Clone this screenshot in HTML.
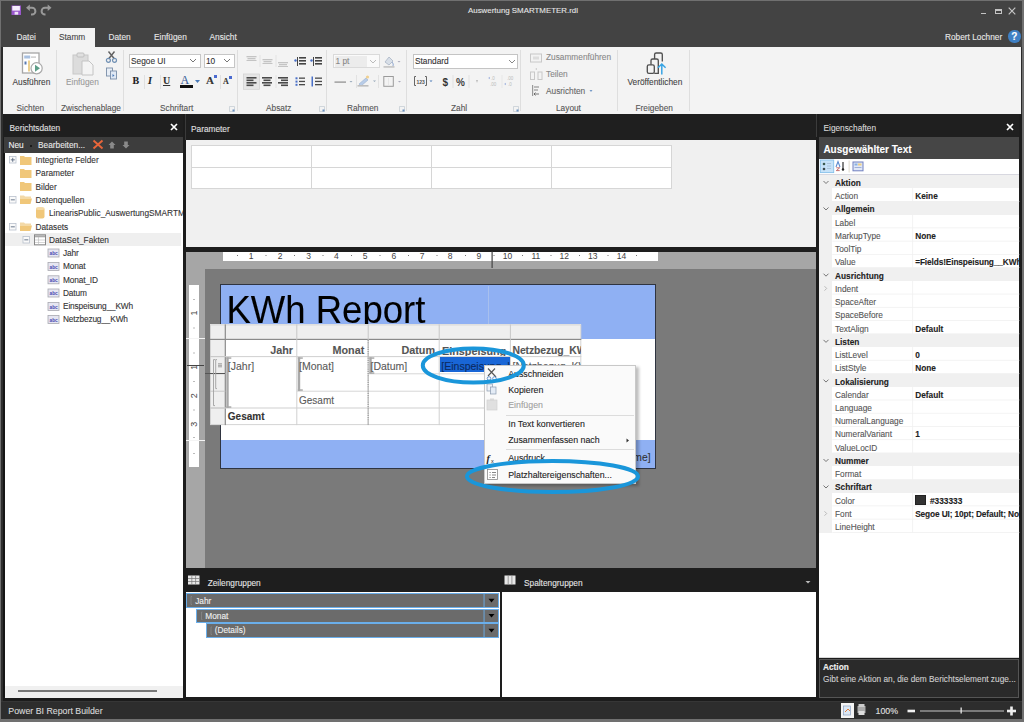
<!DOCTYPE html>
<html><head><meta charset="utf-8">
<style>
*{margin:0;padding:0;box-sizing:border-box}
html,body{width:1024px;height:722px;overflow:hidden;background:#2b2b2b;font-family:"Liberation Sans",sans-serif;font-size:8.3px;color:#333}
.a{position:absolute}
.t{position:absolute;white-space:nowrap;line-height:1;-webkit-text-stroke:0.1px currentColor}
</style></head><body>
<!-- outer frame -->
<div class="a" style="left:0;top:0;width:1024px;height:722px;background:#707070"></div>
<div class="a" style="left:1px;top:1px;width:1021px;height:718px;background:#2a2a2a"></div>
<!-- title bar -->
<div class="a" style="left:1px;top:1px;width:1021px;height:46px;background:#434343"></div>
<!-- ribbon -->
<div class="a" style="left:3px;top:47px;width:1018px;height:66.5px;background:#f3f3f3"></div>
<div class="a" style="left:50px;top:27.5px;width:45px;height:20px;background:#f3f3f3"></div>


<!-- TITLE CONTENT -->
<svg class="a" style="left:0;top:0" width="60" height="20" viewBox="0 0 60 20">
 <rect x="11.5" y="5.5" width="9.5" height="9.5" fill="#9a58cc"/>
 <rect x="12.3" y="6" width="7.6" height="4.6" fill="#f6eefc"/>
 <rect x="14.6" y="11.8" width="3.6" height="2.8" fill="#f0e4f8"/>
 <path d="M26 7.8 L29.8 4.6 V11z" fill="#9a9a9a"/>
 <path d="M28.5 7.8 H32 a3.4 3.4 0 0 1 0 6.8 H31" fill="none" stroke="#9a9a9a" stroke-width="2"/>
 <path d="M51.5 7.8 L47.7 4.6 V11z" fill="#9a9a9a"/>
 <path d="M49 7.8 H45 a3.4 3.4 0 0 0 0 6.8 H45.5" fill="none" stroke="#9a9a9a" stroke-width="2"/>
</svg>
<div class="t" style="left:468px;top:7px;font-size:7.9px;color:#e6e6e6">Auswertung SMARTMETER.rdl</div>
<div class="a" style="left:980.5px;top:12.5px;width:5px;height:1.5px;background:#c4c4c4"></div>
<div class="a" style="left:994.5px;top:8.8px;width:7.5px;height:5px;border:1.1px solid #c4c4c4;border-top-width:2px"></div>
<svg class="a" style="left:1008px;top:6.5px" width="8" height="8" viewBox="0 0 8 8"><path d="M0.7 0.7 L7.3 7.3 M7.3 0.7 L0.7 7.3" stroke="#c4c4c4" stroke-width="1.2"/></svg>
<div class="t" style="left:16.5px;top:32.5px;color:#e8e8e8">Datei</div>
<div class="t" style="left:59px;top:32.5px;color:#444">Stamm</div>
<div class="t" style="left:108.5px;top:32.5px;color:#e8e8e8">Daten</div>
<div class="t" style="left:154px;top:32.5px;color:#e8e8e8">Einfügen</div>
<div class="t" style="left:209.5px;top:32.5px;color:#e8e8e8">Ansicht</div>
<div class="t" style="left:945px;top:32.8px;color:#e8e8e8">Robert Lochner</div>
<div class="a" style="left:1008px;top:30.3px;width:12.5px;height:12.5px;border-radius:50%;background:#3f80c4"></div>
<div class="t" style="left:1011.3px;top:31.8px;font-size:10px;font-weight:bold;color:#fff">?</div>


<!-- RIBBON CONTENT -->
<div class="a" style="left:56px;top:50px;width:1px;height:61px;background:#dedede"></div>
<div class="a" style="left:122.5px;top:50px;width:1px;height:61px;background:#dedede"></div>
<div class="a" style="left:237px;top:50px;width:1px;height:61px;background:#dedede"></div>
<div class="a" style="left:326px;top:50px;width:1px;height:61px;background:#dedede"></div>
<div class="a" style="left:405.5px;top:50px;width:1px;height:61px;background:#dedede"></div>
<div class="a" style="left:520px;top:50px;width:1px;height:61px;background:#dedede"></div>
<div class="a" style="left:617px;top:50px;width:1px;height:61px;background:#dedede"></div>
<div class="a" style="left:689px;top:50px;width:1px;height:61px;background:#dedede"></div>
<!-- group labels -->
<div class="t" style="left:16.5px;top:103.5px;color:#555">Sichten</div>
<div class="t" style="left:61px;top:103.5px;color:#555">Zwischenablage</div>
<div class="t" style="left:160px;top:103.5px;color:#555">Schriftart</div>
<div class="t" style="left:266px;top:103.5px;color:#555">Absatz</div>
<div class="t" style="left:347px;top:103.5px;color:#555">Rahmen</div>
<div class="t" style="left:451px;top:103.5px;color:#555">Zahl</div>
<div class="t" style="left:556px;top:103.5px;color:#555">Layout</div>
<div class="t" style="left:635.5px;top:103.5px;color:#555">Freigeben</div>
<!-- dialog launchers -->
<svg class="a" style="left:0;top:0;overflow:visible" width="1" height="1">
 <g fill="none" stroke="#c0c8d0" stroke-width="0.7">
  <path d="M229.5 106.5 h5 v5 h-5z"/><path d="M319.5 106.5 h5 v5 h-5z"/><path d="M399.5 106.5 h5 v5 h-5z"/><path d="M513.5 106.5 h5 v5 h-5z"/>
 </g>
 <g fill="#6a90c0"><rect x="232.5" y="109.5" width="2" height="2"/><rect x="322.5" y="109.5" width="2" height="2"/><rect x="402.5" y="109.5" width="2" height="2"/><rect x="516.5" y="109.5" width="2" height="2"/></g>
</svg>
<!-- Ausführen -->
<svg class="a" style="left:0;top:0;overflow:visible" width="1" height="1">
 <rect x="22.5" y="53" width="16.5" height="20" fill="#fff" stroke="#a6a6a6" stroke-width="1.3"/>
 <rect x="24.2" y="55.5" width="6" height="3" fill="#a8c0e0"/><rect x="31" y="56.5" width="5" height="1.2" fill="#c0c0c0"/>
 <rect x="28" y="60.5" width="2" height="11" fill="#ecd090"/><rect x="24.5" y="61.5" width="2" height="3" fill="#5a7ab0"/>
 <circle cx="36.6" cy="68.3" r="5.6" fill="#fff" stroke="#a8a8a8" stroke-width="1.2"/>
 <path d="M35 64.8 L40 68.3 L35 71.8z" fill="#5e9e88"/>
</svg>
<div class="t" style="left:12.5px;top:77.5px;color:#444">Ausführen</div>
<!-- Einfügen -->
<svg class="a" style="left:71px;top:51px" width="26" height="26" viewBox="0 0 26 26">
 <rect x="2" y="4" width="15" height="19" fill="#dcdcdc" stroke="#c8c8c8"/>
 <rect x="6" y="2" width="7" height="4" rx="1" fill="#e0e0e0" stroke="#c0c0c0"/>
 <path d="M11 10 h7 l4 4 v10 h-11z" fill="#f4f4f4" stroke="#c4c4c4"/>
</svg>
<div class="t" style="left:66px;top:77.5px;color:#9a9a9a">Einfügen</div>
<svg class="a" style="left:104px;top:50px" width="16" height="32" viewBox="0 0 16 32">
 <path d="M4.5 1.5 L10.5 9 M10.5 1.5 L4.5 9" stroke="#606060" stroke-width="1.4"/>
 <circle cx="4.4" cy="10.3" r="2" fill="none" stroke="#7090b4" stroke-width="1.2"/>
 <circle cx="10.5" cy="10.3" r="2" fill="none" stroke="#7090b4" stroke-width="1.2"/>
 <rect x="2.5" y="18" width="6" height="8" fill="#e8eef6" stroke="#7a8ea8" stroke-width="0.9"/>
 <rect x="6.5" y="21" width="6" height="8" fill="#dfe8f4" stroke="#7a8ea8" stroke-width="0.9"/>
 <path d="M8.5 24 l2 1.5 -2 1.5z" fill="#4a7ab8"/>
</svg>
<!-- Schriftart -->
<div class="a" style="left:129px;top:53.5px;width:72px;height:14.5px;background:#fff;border:1px solid #c6c6c6"></div>
<div class="t" style="left:131px;top:57px;color:#333">Segoe UI</div>
<svg class="a" style="left:189px;top:58px" width="8" height="5" viewBox="0 0 8 5"><path d="M1 1 L4 4 L7 1" fill="none" stroke="#777" stroke-width="1"/></svg>
<div class="a" style="left:204px;top:53.5px;width:31px;height:14.5px;background:#fff;border:1px solid #c6c6c6"></div>
<div class="t" style="left:206px;top:57px;color:#333">10</div>
<svg class="a" style="left:223px;top:58px" width="8" height="5" viewBox="0 0 8 5"><path d="M1 1 L4 4 L7 1" fill="none" stroke="#777" stroke-width="1"/></svg>
<div class="t" style="left:132.5px;top:76px;font-family:'Liberation Serif';font-weight:bold;font-size:10px;color:#222">B</div>
<div class="t" style="left:148px;top:76px;font-family:'Liberation Serif';font-weight:bold;font-style:italic;font-size:10px;color:#222">I</div>
<div class="t" style="left:163px;top:76px;font-family:'Liberation Serif';font-weight:bold;font-size:10px;color:#333;text-decoration:underline">U</div>
<div class="t" style="left:180.5px;top:73.5px;font-family:'Liberation Serif';font-size:12px;color:#3a5f9a">A</div>
<div class="a" style="left:180px;top:84.5px;width:13px;height:3px;background:#111"></div>
<svg class="a" style="left:195px;top:80px" width="5" height="3"><path d="M0 0h5l-2.5 3z" fill="#4a7ab8"/></svg>
<div class="t" style="left:206px;top:75px;font-family:'Liberation Serif';font-weight:bold;font-size:11px;color:#333">A</div>
<div class="a" style="left:214px;top:75px;width:2.5px;height:2.5px;background:#4a6ad0"></div>
<div class="t" style="left:223px;top:78px;font-family:'Liberation Serif';font-weight:bold;font-size:8px;color:#333">A</div>
<div class="a" style="left:229px;top:76px;width:2.5px;height:2.5px;background:#4a6ad0"></div>
<div class="a" style="left:144px;top:75px;width:1px;height:14px;background:#e0e0e0"></div>
<div class="a" style="left:160px;top:75px;width:1px;height:14px;background:#e0e0e0"></div>
<div class="a" style="left:220px;top:75px;width:1px;height:14px;background:#e0e0e0"></div>


<!-- ABSATZ -->
<svg class="a" style="left:0;top:0;overflow:visible" width="1" height="1">
 <g fill="#c4c4c4">
  <rect x="246.5" y="56" width="10" height="1.3"/><rect x="247.5" y="58" width="8" height="1.3"/><rect x="246.5" y="60" width="10" height="1"/>
  <rect x="262.5" y="59" width="10" height="1.3"/><rect x="263.5" y="61" width="8" height="1.3"/><rect x="262.5" y="63" width="10" height="1"/>
  <rect x="278" y="62" width="10" height="1.3"/><rect x="279" y="64" width="8" height="1.3"/><rect x="278" y="66" width="10" height="1"/>
 </g>
 <rect x="259.5" y="55" width="1" height="12" fill="#e4e4e4"/><rect x="275.5" y="55" width="1" height="12" fill="#e4e4e4"/>
 <g fill="#444">
  <rect x="299" y="57" width="7" height="1.6"/><rect x="299" y="60" width="7" height="1.6"/><rect x="299" y="63" width="7" height="1.6"/>
  <rect x="297" y="57" width="1" height="9"/>
  <rect x="315" y="57" width="7" height="1.6"/><rect x="315" y="60" width="7" height="1.6"/><rect x="315" y="63" width="7" height="1.6"/>
  <rect x="313" y="57" width="1" height="9"/>
 </g>
 <circle cx="295.5" cy="60.5" r="1.2" fill="#4a70c8"/><circle cx="311.5" cy="60.5" r="1.2" fill="#4a70c8"/>
 <rect x="243.5" y="74" width="16" height="15.3" fill="#e6e6e6" stroke="#d0d0d0" stroke-width="0.7"/>
 <g fill="#4a4a4a">
  <rect x="246.5" y="77" width="10" height="1.6"/><rect x="246.5" y="79.5" width="7" height="1.6"/><rect x="246.5" y="82" width="10" height="1.6"/><rect x="246.5" y="84.5" width="7" height="1.6"/>
  <rect x="262" y="77" width="10" height="1.6"/><rect x="263.5" y="79.5" width="7" height="1.6"/><rect x="262" y="82" width="10" height="1.6"/><rect x="263.5" y="84.5" width="7" height="1.6"/>
  <rect x="278" y="77" width="10" height="1.6"/><rect x="281" y="79.5" width="7" height="1.6"/><rect x="278" y="82" width="10" height="1.6"/><rect x="281" y="84.5" width="7" height="1.6"/>
  <rect x="299" y="77.5" width="6" height="1.3"/><rect x="299" y="80.8" width="6" height="1.3"/><rect x="299" y="84" width="6" height="1.3"/>
  <rect x="315" y="77.5" width="7" height="1.3"/><rect x="315" y="80.8" width="7" height="1.3"/><rect x="315" y="84" width="7" height="1.3"/>
 </g>
 <g fill="#4a70c8">
  <rect x="295.5" y="77.3" width="2" height="2"/><rect x="295.5" y="80.6" width="2" height="2"/><rect x="295.5" y="83.8" width="2" height="2"/>
  <rect x="311.5" y="76.5" width="1.5" height="10"/>
 </g>
 <rect x="275.5" y="75" width="1" height="13" fill="#e4e4e4"/>
</svg>
<!-- RAHMEN -->
<div class="a" style="left:333px;top:53.7px;width:47px;height:14.4px;background:#fafafa;border:1px solid #dadada"></div>
<div class="a" style="left:335px;top:55.5px;width:32px;height:11px;background:#ececec"></div>
<div class="t" style="left:335.5px;top:57px;color:#888">1 pt</div>
<svg class="a" style="left:369px;top:58.5px" width="8" height="5" viewBox="0 0 8 5"><path d="M1 1 L4 4 L7 1" fill="none" stroke="#bbb" stroke-width="1"/></svg>
<svg class="a" style="left:0;top:0;overflow:visible" width="1" height="1">
 <path d="M385 62 l4 -5 4 4 -4 4z" fill="#d8dfe8" stroke="#a8b4c4" stroke-width="0.8"/>
 <path d="M392 62 q2 2 1 4" fill="none" stroke="#90a8d0" stroke-width="1"/>
 <rect x="383.5" y="66" width="11" height="1.8" fill="#c8c8c8"/>
 <path d="M397.5 61 h3 l-1.5 1.6z" fill="#aab"/>
 <rect x="334.5" y="81.5" width="11.5" height="1.2" fill="#8a8a8a"/>
 <path d="M349.5 81 h3 l-1.5 1.6z" fill="#9ab"/>
 <rect x="356" y="75" width="1" height="13" fill="#e2e2e2"/>
 <path d="M359 84 l7 -6 2 2 -7 6z" fill="#b8cce8" stroke="#98b0d0" stroke-width="0.6"/>
 <circle cx="367.5" cy="77" r="1.6" fill="#f0d090"/>
 <rect x="357.5" y="85" width="11" height="1.6" fill="#bdbdbd"/>
 <path d="M373 80.5 h3 l-1.5 1.6z" fill="#9ab"/>
 <rect x="378" y="75" width="1" height="13" fill="#e2e2e2"/>
 <rect x="383.8" y="76.5" width="9.5" height="9.8" fill="none" stroke="#9a9a9a" stroke-width="1"/>
 <rect x="388.3" y="78" width="0.6" height="7" fill="#ddd"/>
 <path d="M398 81 h3 l-1.5 1.6z" fill="#aab"/>
</svg>
<!-- ZAHL -->
<div class="a" style="left:413px;top:53.6px;width:104.5px;height:15px;background:#fff;border:1px solid #c4c4c4"></div>
<div class="t" style="left:415px;top:57px;color:#333">Standard</div>
<svg class="a" style="left:508px;top:58.5px" width="8" height="5" viewBox="0 0 8 5"><path d="M1 1 L4 4 L7 1" fill="none" stroke="#888" stroke-width="1"/></svg>
<svg class="a" style="left:0;top:0;overflow:visible" width="1" height="1">
 <path d="M416 76.5 h-1.5 v9 h1.5 M425 76.5 h1.5 v9 h-1.5" fill="none" stroke="#666" stroke-width="1"/>
 <text x="416.5" y="83.5" font-family="Liberation Sans" font-size="5" font-weight="bold" fill="#555">123</text>
 <path d="M429.5 80.5 h3 l-1.5 1.6z" fill="#4a7ab8"/>
 <text x="442.5" y="85.5" font-family="Liberation Sans" font-size="10" font-weight="bold" fill="#333">$</text>
 <rect x="452.5" y="75" width="1" height="13" fill="#e2e2e2"/>
 <text x="456" y="85.5" font-family="Liberation Sans" font-size="10" font-weight="bold" fill="#444">%</text>
 <rect x="468.5" y="75" width="1" height="13" fill="#e2e2e2"/>
 <path d="M476 80 h2 l-1 3z" fill="#bbb"/>
 <text x="491" y="80" font-family="Liberation Sans" font-size="4.5" fill="#bbb">.0</text>
 <text x="490" y="86" font-family="Liberation Sans" font-size="4.5" fill="#bbb">.00</text>
 <path d="M488 78 l2 -1.2 v2.4z" fill="#a8b8e0"/>
 <rect x="501.5" y="75" width="1" height="13" fill="#e8e8e8"/>
 <text x="507" y="80" font-family="Liberation Sans" font-size="4.5" fill="#bbb">.00</text>
 <text x="508" y="86" font-family="Liberation Sans" font-size="4.5" fill="#bbb">.0</text>
 <path d="M504 84 l2 -1.2 v2.4z" fill="#a8b8e0"/>
</svg>
<!-- LAYOUT -->
<svg class="a" style="left:0;top:0;overflow:visible" width="1" height="1">
 <rect x="530.5" y="54" width="11" height="8" fill="none" stroke="#c8c8c8" stroke-width="1"/>
 <rect x="533" y="56.5" width="6" height="3" fill="#ddd"/>
 <rect x="530.5" y="72" width="4" height="7.5" fill="none" stroke="#c8c8c8" stroke-width="1"/>
 <rect x="538" y="72" width="4" height="7.5" fill="none" stroke="#c8c8c8" stroke-width="1"/>
 <circle cx="536.3" cy="69" r="0.7" fill="#bbb"/>
 <rect x="532" y="85" width="1.2" height="11" fill="#999"/>
 <rect x="534" y="86" width="5" height="2" fill="#bbb"/><rect x="534" y="89" width="4" height="2" fill="#bbb"/>
 <path d="M539 94 h-5 l1.5 -1.5 M534 94 l1.5 1.5" fill="none" stroke="#555" stroke-width="0.8"/>
 <path d="M589.5 90.2 h3 l-1.5 1.6z" fill="#4a7ab8"/>
</svg>
<div class="t" style="left:546px;top:53px;color:#888">Zusammenführen</div>
<div class="t" style="left:546px;top:70px;color:#888">Teilen</div>
<div class="t" style="left:546px;top:87px;color:#666">Ausrichten</div>
<!-- FREIGEBEN -->
<svg class="a" style="left:0;top:0;overflow:visible" width="1" height="1">
 <g fill="none" stroke="#505050" stroke-width="1.35">
  <rect x="647.3" y="64.8" width="7" height="8.6" rx="1.6"/>
  <path d="M651 64.8 V60.6 a1.6 1.6 0 0 1 1.6 -1.6 H656.7 a1.6 1.6 0 0 1 1.6 1.6 V73.4 H654.3"/>
  <path d="M654.6 59 V54.6 a1.6 1.6 0 0 1 1.6 -1.6 H660.7 a1.6 1.6 0 0 1 1.6 1.6 V61.5"/>
 </g>
 <path d="M661.8 74.6 V64.3 M658 67.8 L661.8 64 L665.6 67.8" fill="none" stroke="#38a4e4" stroke-width="1.5"/>
</svg>
<div class="t" style="left:627.5px;top:77.5px;color:#444">Veröffentlichen</div>

<!-- gaps -->
<div class="a" style="left:1px;top:113.5px;width:1021px;height:588px;background:#1c1c1c"></div>
<div class="a" style="left:1px;top:113.5px;width:2px;height:588px;background:#2e2e2e"></div>
<!-- left panel -->
<div class="a" style="left:3px;top:114px;width:180px;height:23px;background:#1f1f1f"></div>
<div class="a" style="left:4px;top:137px;width:179px;height:16px;background:#3d3d3d"></div>
<div class="a" style="left:3px;top:153px;width:2px;height:544px;background:#161616"></div><div class="a" style="left:4.7px;top:153px;width:178.3px;height:544px;background:#fff"></div>


<!-- LEFT CONTENT -->
<div class="t" style="left:9.5px;top:124px;color:#e0e0e0">Berichtsdaten</div>
<svg class="a" style="left:170px;top:123px" width="8" height="8" viewBox="0 0 8 8"><path d="M1 1 L7 7 M7 1 L1 7" stroke="#fff" stroke-width="1.7"/></svg>
<div class="t" style="left:8.5px;top:141.3px;color:#f0f0f0">Neu</div>
<div class="a" style="left:29.5px;top:144.5px;width:2px;height:2px;background:#1a1a1a"></div>
<div class="t" style="left:38px;top:141.3px;color:#e8e8e8">Bearbeiten...</div>
<svg class="a" style="left:92px;top:139px" width="12" height="11" viewBox="0 0 12 11"><path d="M1.5 1.5 L10.5 9.5 M10.5 1.5 L1.5 9.5" stroke="#e8653a" stroke-width="1.9"/></svg>
<svg class="a" style="left:107px;top:140px" width="28" height="10" viewBox="0 0 28 10"><path d="M5 1.5 L8.5 5 H6.8 V8.5 H3.2 V5 H1.5z" fill="#8a8a8a"/><path d="M19 8.5 L22.5 5 H20.8 V1.5 H17.2 V5 H15.5z" fill="#8a8a8a"/></svg>
<!-- tree -->
<div class="a" style="left:5px;top:232.8px;width:176px;height:12.8px;background:#efefef"></div>
<svg class="a" style="left:0;top:0;overflow:visible" width="1" height="1">
 <g fill="#fafafa" stroke="#b8c0cc" stroke-width="0.8">
  <rect x="9.5" y="156.5" width="6.5" height="6.5"/>
  <rect x="9.5" y="196.5" width="6.5" height="6.5"/>
  <rect x="9.5" y="223.5" width="6.5" height="6.5"/>
  <rect x="23" y="236.5" width="6.5" height="6.5"/>
 </g>
 <g fill="#5a6a80">
  <rect x="10.8" y="159.4" width="4" height="0.9"/><rect x="12.3" y="157.8" width="0.9" height="4"/>
  <rect x="10.8" y="199.4" width="4" height="0.9"/>
  <rect x="10.8" y="226.4" width="4" height="0.9"/>
  <rect x="24.3" y="239.4" width="4" height="0.9"/>
 </g>
 <g fill="#f0c77a">
  <path d="M20 156 h4 l1 1 h6.5 v8 h-11.5z"/>
  <path d="M20 169 h4 l1 1 h6.5 v8 h-11.5z"/>
  <path d="M20 182 h4 l1 1 h6.5 v8 h-11.5z"/>
 </g>
 <g fill="#f3d9a8"><path d="M20 195.5 h4 l1 1 h6 v2 h-11z"/><path d="M20 222.5 h4 l1 1 h6 v2 h-11z"/></g>
 <g fill="#f0c77a"><path d="M20 198.5 h12 l-1.5 5.5 h-10.5z"/><path d="M20 225.5 h12 l-1.5 5.5 h-10.5z"/></g>
 <rect x="36" y="207.5" width="8.5" height="11" rx="2" fill="#f0c77a"/>
 <ellipse cx="40.25" cy="208.5" rx="4.25" ry="1.5" fill="#f6dba8"/>
 <rect x="34.5" y="234.8" width="11" height="10" fill="#fff" stroke="#888" stroke-width="1"/>
 <rect x="35" y="235.3" width="10" height="2" fill="#aaa"/>
 <path d="M38.5 237 v7.5 M35 240 h10 M35 242.5 h10" stroke="#bbb" stroke-width="0.6"/>
 <g>
  <rect x="48" y="249" width="11" height="8" fill="#e6e6f2" stroke="#a8a8b0" stroke-width="0.8"/>
  <rect x="48" y="262.5" width="11" height="8" fill="#e6e6f2" stroke="#a8a8b0" stroke-width="0.8"/>
  <rect x="48" y="275.8" width="11" height="8" fill="#e6e6f2" stroke="#a8a8b0" stroke-width="0.8"/>
  <rect x="48" y="289" width="11" height="8" fill="#e6e6f2" stroke="#a8a8b0" stroke-width="0.8"/>
  <rect x="48" y="302.5" width="11" height="8" fill="#e6e6f2" stroke="#a8a8b0" stroke-width="0.8"/>
  <rect x="48" y="315.5" width="11" height="8" fill="#e6e6f2" stroke="#a8a8b0" stroke-width="0.8"/>
 </g>
 <g font-family="Liberation Sans" font-size="4.8" font-weight="bold" fill="#4a4ab0">
  <text x="49.5" y="255">abc</text><text x="49.5" y="268.5">abc</text><text x="49.5" y="281.8">abc</text><text x="49.5" y="295">abc</text><text x="49.5" y="308.5">abc</text><text x="49.5" y="321.5">abc</text>
 </g>
</svg>
<div class="t" style="left:35.5px;top:156px;color:#333">Integrierte Felder</div>
<div class="t" style="left:35.5px;top:169.3px;color:#333">Parameter</div>
<div class="t" style="left:35.5px;top:182.5px;color:#333">Bilder</div>
<div class="t" style="left:35.5px;top:195.7px;color:#333">Datenquellen</div>
<div class="a" style="left:49px;top:208px;width:134px;height:11px;overflow:hidden"><div class="t" style="left:0;top:1px;color:#333">LinearisPublic_AuswertungSMARTMETER</div></div>
<div class="t" style="left:35.5px;top:222.8px;color:#333">Datasets</div>
<div class="t" style="left:49px;top:235.9px;color:#333">DataSet_Fakten</div>
<div class="t" style="left:63px;top:248.8px;color:#333;letter-spacing:-0.15px">Jahr</div>
<div class="t" style="left:63px;top:262.3px;color:#333;letter-spacing:-0.15px">Monat</div>
<div class="t" style="left:63px;top:275.6px;color:#333;letter-spacing:-0.15px">Monat_ID</div>
<div class="t" style="left:63px;top:288.7px;color:#333;letter-spacing:-0.15px">Datum</div>
<div class="t" style="left:63px;top:302.3px;color:#333;letter-spacing:-0.15px">Einspeisung__KWh</div>
<div class="t" style="left:63px;top:315.3px;color:#333;letter-spacing:-0.15px">Netzbezug__KWh</div>
<!-- h scrollbar -->
<div class="a" style="left:5px;top:686px;width:178px;height:11.5px;background:#f0f0f0"></div>
<div class="a" style="left:17.5px;top:690.3px;width:139.5px;height:2px;background:#777"></div>
<!-- status text -->


<!-- center panel -->
<div class="a" style="left:186px;top:114px;width:630px;height:26px;background:#1f1f1f"></div>
<div class="a" style="left:186px;top:140px;width:630px;height:107px;background:#f0f0f0"></div>
<div class="a" style="left:186px;top:247px;width:630px;height:4.5px;background:#1e1e1e"></div>
<div class="a" style="left:186px;top:251.5px;width:630px;height:317px;background:#a6a6a6"></div>
<div class="a" style="left:205px;top:269px;width:611px;height:299px;background:#7a7a7a"></div>
<div class="a" style="left:186px;top:568px;width:630px;height:24px;background:#1e1e1e"></div>
<div class="a" style="left:186px;top:592px;width:314px;height:105px;background:#fff"></div>
<div class="a" style="left:502px;top:592px;width:314px;height:105px;background:#fff"></div>


<!-- CENTER CONTENT -->
<div class="t" style="left:191px;top:125.3px;color:#e0e0e0">Parameter</div>
<div class="a" style="left:190.5px;top:145px;width:481px;height:44px;background:#fff;border:1px solid #d6d6d6"></div>
<div class="a" style="left:190.5px;top:166.8px;width:481px;height:1px;background:#d6d6d6"></div>
<div class="a" style="left:310.5px;top:145px;width:1px;height:44px;background:#d6d6d6"></div>
<div class="a" style="left:431px;top:145px;width:1px;height:44px;background:#d6d6d6"></div>
<div class="a" style="left:551.3px;top:145px;width:1px;height:44px;background:#d6d6d6"></div>
<!-- ruler -->
<div class="a" style="left:223px;top:251.7px;width:434.5px;height:9px;background:#fff"></div>
<svg class="a" style="left:0;top:0;overflow:visible" width="1" height="1">
 <g font-family="Liberation Sans" font-size="8.5" fill="#444"><text x="251" y="258.5" text-anchor="middle">1</text><text x="280.1" y="258.5" text-anchor="middle">2</text><text x="308.5" y="258.5" text-anchor="middle">3</text><text x="336.3" y="258.5" text-anchor="middle">4</text><text x="365" y="258.5" text-anchor="middle">5</text><text x="393.8" y="258.5" text-anchor="middle">6</text><text x="422" y="258.5" text-anchor="middle">7</text><text x="450" y="258.5" text-anchor="middle">8</text><text x="478.9" y="258.5" text-anchor="middle">9</text><text x="507.4" y="258.5" text-anchor="middle">10</text><text x="535.9" y="258.5" text-anchor="middle">11</text><text x="564.2" y="258.5" text-anchor="middle">12</text><text x="592.7" y="258.5" text-anchor="middle">13</text><text x="621.5" y="258.5" text-anchor="middle">14</text></g>
 <g fill="#777"><rect x="237.0" y="255" width="1" height="1"/><rect x="265.5" y="255" width="1" height="1"/><rect x="294.0" y="255" width="1" height="1"/><rect x="322.5" y="255" width="1" height="1"/><rect x="351.0" y="255" width="1" height="1"/><rect x="379.5" y="255" width="1" height="1"/><rect x="408.0" y="255" width="1" height="1"/><rect x="436.5" y="255" width="1" height="1"/><rect x="465.0" y="255" width="1" height="1"/><rect x="493.5" y="255" width="1" height="1"/><rect x="522.0" y="255" width="1" height="1"/><rect x="550.5" y="255" width="1" height="1"/><rect x="579.0" y="255" width="1" height="1"/><rect x="607.5" y="255" width="1" height="1"/><rect x="636.0" y="255" width="1" height="1"/></g>
 <rect x="491.5" y="251.5" width="1.2" height="16.5" fill="#444"/>
</svg>
<!-- vertical ruler -->
<div class="a" style="left:188.8px;top:284.8px;width:10.5px;height:182.2px;background:#fff"></div>
<div class="a" style="left:186px;top:338.3px;width:19px;height:1.2px;background:#f4f4f4"></div>
<div class="a" style="left:186px;top:439.5px;width:19px;height:1.2px;background:#f4f4f4"></div>
<div class="a" style="left:187px;top:364.5px;width:17px;height:1px;background:#444"></div>
<svg class="a" style="left:0;top:0;overflow:visible" width="1" height="1">
 <g font-family="Liberation Sans" font-size="9" fill="#444">
  <text transform="translate(196.5,313) rotate(-90)" text-anchor="middle">1</text>
  <text transform="translate(196.5,367.3) rotate(-90)" text-anchor="middle">1</text>
  <text transform="translate(196.5,395.8) rotate(-90)" text-anchor="middle">2</text>
  <text transform="translate(196.5,424.3) rotate(-90)" text-anchor="middle">3</text>
 </g>
 <g fill="#777">
  <rect x="193.5" y="299" width="1" height="1"/><rect x="193.5" y="327.5" width="1" height="1"/>
  <rect x="193.5" y="352.5" width="1" height="1"/><rect x="193.5" y="381" width="1" height="1"/><rect x="193.5" y="409.5" width="1" height="1"/>
  <rect x="193.5" y="453" width="1" height="1"/><rect x="193.5" y="437" width="1" height="1"/>
 </g>
</svg>
<!-- report body -->
<div class="a" style="left:220px;top:284px;width:436px;height:184.5px;background:#2f3440"></div>
<div class="a" style="left:221px;top:284.8px;width:434.3px;height:182.8px;background:#fff"></div>
<div class="a" style="left:221px;top:284.8px;width:434.3px;height:54px;background:#8fb0f3"></div>
<div class="a" style="left:221px;top:440px;width:434.3px;height:27.5px;background:#8fb0f3"></div>
<div class="a" style="left:221.5px;top:285.5px;width:267px;height:53px;border:1px solid #a8c0ee;border-top:none;border-left:none"></div>
<div class="t" style="left:226.5px;top:291px;font-size:36.5px;color:#000;transform:scaleY(1.06);transform-origin:0 0">KWh Report</div>
<div class="a" style="left:560px;top:452px;width:90.5px;height:13px;overflow:hidden"><div class="t" style="right:0;top:1px;font-size:10.3px;color:#333">[&amp;ExecutionTime]</div></div>


<!-- TABLIX -->
<div class="a" style="left:210px;top:324.4px;width:371.29999999999995px;height:100.70000000000005px;background:#fff"></div>
<div class="a" style="left:210px;top:324.4px;width:371.29999999999995px;height:14.900000000000034px;background:#efefef"></div>
<div class="a" style="left:210px;top:324.4px;width:15.300000000000011px;height:100.70000000000005px;background:#efefef"></div>
<svg class="a" style="left:0;top:0;overflow:visible" width="1" height="1">
<rect x="210.5" y="324.9" width="370.29999999999995" height="99.70000000000005" fill="none" stroke="#d4d4d4" stroke-width="1"/>
<rect x="210" y="338.8" width="371.29999999999995" height="1.2" fill="#8a8a8a"/>
<rect x="224.70000000000002" y="324.4" width="1.2" height="100.70000000000005" fill="#8a8a8a"/>
<rect x="296.3" y="324.4" width="1" height="14.900000000000034" fill="#c8c8c8"/>
<rect x="296.3" y="339.3" width="1" height="85.80000000000001" fill="#d0d0d0"/>
<rect x="367.7" y="324.4" width="1" height="14.900000000000034" fill="#c8c8c8"/>
<rect x="367.7" y="339.3" width="1" height="85.80000000000001" fill="#d0d0d0"/>
<rect x="438.7" y="324.4" width="1" height="14.900000000000034" fill="#c8c8c8"/>
<rect x="438.7" y="339.3" width="1" height="85.80000000000001" fill="#d0d0d0"/>
<rect x="509.9" y="324.4" width="1" height="14.900000000000034" fill="#c8c8c8"/>
<rect x="509.9" y="339.3" width="1" height="85.80000000000001" fill="#d0d0d0"/>
<rect x="210" y="356.1" width="371.29999999999995" height="1" fill="#d0d0d0"/>
<rect x="368.2" y="373.3" width="213.09999999999997" height="1" fill="#d6d6d6"/>
<rect x="296.8" y="390.7" width="284.49999999999994" height="1" fill="#d6d6d6"/>
<rect x="210" y="407.5" width="371.29999999999995" height="1" fill="#d0d0d0"/>
<rect x="210" y="356.1" width="15.300000000000011" height="1" fill="#c8c8c8"/>
<rect x="210" y="373.3" width="15.300000000000011" height="1" fill="#c8c8c8"/>
<rect x="210" y="390.7" width="15.300000000000011" height="1" fill="#c8c8c8"/>
<rect x="210" y="407.5" width="15.300000000000011" height="1" fill="#c8c8c8"/>
<rect x="205" y="373" width="20" height="1" fill="#555"/>
<path d="M368.2 340 V425" stroke="#a8a8a8" stroke-width="1.6" stroke-dasharray="1.2 1"/>
<g fill="#a9a9a9">
<rect x="226.3" y="357.3" width="2.4" height="50.5"/><rect x="226.3" y="357.3" width="5" height="1.5"/><rect x="226.3" y="406.3" width="5" height="1.5"/>
<rect x="297.8" y="357.3" width="2.4" height="33.5"/><rect x="297.8" y="357.3" width="5" height="1.5"/><rect x="297.8" y="389.3" width="5" height="1.5"/>
<rect x="369.3" y="357.3" width="2.4" height="16"/><rect x="369.3" y="357.3" width="5" height="1.5"/><rect x="369.3" y="372.3" width="5" height="1.5"/>
</g>
<path d="M215 359.6 h-1.5 v46 h1.5 M217 359.6 h-1.3 v29 h1.3" fill="none" stroke="#a0a0a0" stroke-width="0.9"/>
<path d="M218 363.8 h4 M218 365.3 h4 M218 366.8 h4" stroke="#8a8a8a" stroke-width="0.8"/>
</svg>
<div class="t" style="right:731px;top:345px;font-size:10.8px;font-weight:bold;color:#555">Jahr</div>
<div class="t" style="right:659.7px;top:345px;font-size:10.8px;font-weight:bold;color:#555">Monat</div>
<div class="t" style="right:589px;top:345px;font-size:10.8px;font-weight:bold;color:#555">Datum</div>
<div class="a" style="left:440px;top:340px;width:70px;height:16px;overflow:hidden"><div class="t" style="left:2px;top:5.5px;font-size:10.8px;font-weight:bold;color:#555">Einspeisung_KWh</div></div>
<div class="a" style="left:511px;top:340px;width:70px;height:16px;overflow:hidden"><div class="t" style="left:1.5px;top:5.5px;font-size:10.4px;font-weight:bold;color:#555;letter-spacing:-0.1px">Netzbezug_KWh</div></div>
<div class="t" style="left:227.8px;top:361px;font-size:10.5px;color:#5a5a5a">[Jahr]</div>
<div class="t" style="left:299px;top:361px;font-size:10.5px;color:#5a5a5a">[Monat]</div>
<div class="t" style="left:370.5px;top:361px;font-size:10.5px;color:#5a5a5a">[Datum]</div>
<div class="a" style="left:511px;top:357px;width:70px;height:16px;overflow:hidden"><div class="t" style="left:1.5px;top:4px;font-size:10.5px;color:#5a5a5a">[Netzbezug_KWh]</div></div>
<div class="t" style="left:299px;top:395.5px;font-size:10px;color:#5a5a5a">Gesamt</div>
<div class="t" style="left:227.8px;top:411.8px;font-size:10px;font-weight:bold;color:#333">Gesamt</div>
<div class="a" style="left:439.8px;top:357px;width:70.5px;height:14.5px;background:#1966d6"></div>
<div class="a" style="left:439.8px;top:357px;width:70.5px;height:14.5px;overflow:hidden"><div class="t" style="left:1.5px;top:3.5px;font-size:10.5px;color:#0c2a60">[Einspeisung_KWh]</div></div>


<!-- CONTEXT MENU -->
<div class="a" style="left:486px;top:367px;width:153px;height:119px;background:rgba(0,0,0,0.25);filter:blur(1.5px)"></div>
<div class="a" style="left:483.7px;top:365px;width:152.6px;height:118.6px;background:#fafafa;border:1px solid #c8c8c8"></div>
<div class="a" style="left:505.8px;top:414.5px;width:128.5px;height:1px;background:#dcdcdc"></div>
<div class="a" style="left:505.8px;top:449px;width:128.5px;height:1px;background:#dcdcdc"></div>
<div class="t" style="left:508.2px;top:370.0px;font-size:8.8px;color:#222">Ausschneiden</div>
<div class="t" style="left:508.2px;top:385.5px;font-size:8.8px;color:#222">Kopieren</div>
<div class="t" style="left:508.2px;top:401.0px;font-size:8.8px;color:#a0a0a0">Einfügen</div>
<div class="t" style="left:508.2px;top:420.2px;font-size:8.8px;color:#222">In Text konvertieren</div>
<div class="t" style="left:508.2px;top:436.3px;font-size:8.8px;color:#222">Zusammenfassen nach</div>
<div class="t" style="left:508.2px;top:454.3px;font-size:8.8px;color:#222">Ausdruck</div>
<div class="t" style="left:508.2px;top:470.9px;font-size:8.8px;color:#222">Platzhaltereigenschaften...</div>
<svg class="a" style="left:0;top:0;overflow:visible" width="1" height="1">
 <path d="M626.5 438.5 l2.5 2 -2.5 2z" fill="#333"/>
 <path d="M488 368.5 L496 377 M495 368.5 L488 376" stroke="#555" stroke-width="1.1"/>
 <circle cx="489" cy="378.5" r="1.8" fill="none" stroke="#5a8ac8" stroke-width="0.9"/>
 <circle cx="494.5" cy="378.5" r="1.8" fill="none" stroke="#5a8ac8" stroke-width="0.9"/>
 <rect x="487" y="384" width="5.5" height="7" fill="#eef2f8" stroke="#8a9ab0" stroke-width="0.7"/>
 <rect x="490.5" y="387" width="5.5" height="7" fill="#e4ecf6" stroke="#8a9ab0" stroke-width="0.7"/>
 <rect x="487" y="400" width="10" height="10" fill="#e0e0e0" stroke="#d0d0d0" stroke-width="0.7"/>
 <rect x="490" y="398.5" width="4" height="2.5" fill="#d8d8d8"/>
 <text x="486.5" y="462" font-family="Liberation Serif" font-style="italic" font-weight="bold" font-size="10" fill="#222">f</text>
 <text x="491" y="463" font-family="Liberation Sans" font-size="5.5" fill="#222">x</text>
 <rect x="487.5" y="469.5" width="10" height="10" fill="#fff" stroke="#8a8a8a" stroke-width="0.8"/>
 <path d="M489.5 472.5 h1.2 M492 472.5 h4 M489.5 475 h1.2 M492 475 h4 M489.5 477.5 h1.2 M492 477.5 h3" stroke="#555" stroke-width="0.7"/>
</svg>
<!-- ELLIPSES -->
<svg class="a" style="left:0;top:0;overflow:visible" width="1" height="1">
 <ellipse cx="473.3" cy="365.5" rx="50.5" ry="17" fill="none" stroke="#1a96da" stroke-width="4"/>
 <ellipse cx="552.5" cy="476.5" rx="85.5" ry="15.5" fill="none" stroke="#1a96da" stroke-width="4"/>
</svg>


<!-- GROUPS -->
<svg class="a" style="left:0;top:0;overflow:visible" width="1" height="1">
 <rect x="188" y="575.5" width="11.5" height="9" fill="#e8e8e8"/>
 <path d="M188 578.5 h11.5 M188 581.5 h11.5 M191.8 575.5 v9 M195.6 575.5 v9" stroke="#777" stroke-width="0.7"/>
 <rect x="504.5" y="575.5" width="11" height="9" fill="#e8e8e8"/>
 <path d="M508.2 575.5 v9 M511.9 575.5 v9" stroke="#888" stroke-width="0.8"/>
 <path d="M805.5 581 h5 l-2.5 2.5z" fill="#bbb"/>
</svg>
<div class="t" style="left:207.7px;top:579px;color:#e4e4e4">Zeilengruppen</div>
<div class="t" style="left:524px;top:579px;color:#e4e4e4">Spaltengruppen</div>
<div class="a" style="left:500px;top:592px;width:2px;height:106px;background:#1e1e1e"></div>
<div class="a" style="left:185.8px;top:593px;width:313px;height:15.2px;background:#6b6b6b;border:1px solid #6aaeea"></div>
<div class="a" style="left:196.3px;top:608.5px;width:302.5px;height:14.5px;background:#6b6b6b;border:1px solid #6aaeea"></div>
<div class="a" style="left:205.7px;top:623.4px;width:293px;height:14.5px;background:#6b6b6b;border:1px solid #6aaeea"></div>
<svg class="a" style="left:0;top:0;overflow:visible" width="1" height="1">
 <g fill="#6aaeea"><rect x="483.6" y="594" width="0.9" height="13.5"/><rect x="483.6" y="609.5" width="0.9" height="13"/><rect x="483.6" y="624.3" width="0.9" height="13"/></g>
 <g fill="#000"><path d="M488.5 598.8 h6 l-3 3.6z"/><path d="M488.5 614 h6 l-3 3.6z"/><path d="M488.5 628.8 h6 l-3 3.6z"/></g>
 <g fill="none" stroke="#888" stroke-width="0.8"><path d="M192 596.5 h-1 v8 h1"/><path d="M202.5 612 h-1 v7.5 h1"/><path d="M212 627 h-1 v7.5 h1"/></g>
</svg>
<div class="t" style="left:195.2px;top:596.8px;color:#f0f0f0">Jahr</div>
<div class="t" style="left:205.3px;top:611.6px;color:#f0f0f0">Monat</div>
<div class="t" style="left:214.7px;top:626.4px;color:#f0f0f0">(Details)</div>

<!-- right panel -->
<div class="a" style="left:819px;top:114px;width:200px;height:23px;background:#1f1f1f"></div>
<div class="a" style="left:819px;top:137px;width:200px;height:21.6px;background:#464646"></div>
<div class="a" style="left:819px;top:158.6px;width:200px;height:15.4px;background:#fff"></div>
<div class="a" style="left:819px;top:174px;width:200px;height:1px;background:#d8d8e0"></div>
<div class="a" style="left:819px;top:175px;width:200px;height:482px;background:#fff"></div>
<div class="a" style="left:819px;top:658.5px;width:200px;height:39px;background:#2a2a2a;border:1px solid #555"></div>

<!-- status bar -->
<div class="a" style="left:1px;top:701px;width:1021px;height:18px;background:#2d2d2d"></div><div class="a" style="left:1px;top:701px;width:1021px;height:1px;background:#363636"></div>


<!-- RIGHT CONTENT -->
<div class="t" style="left:823.5px;top:124px;color:#d8d8d8">Eigenschaften</div>
<svg class="a" style="left:1006px;top:123px" width="8" height="8" viewBox="0 0 8 8"><path d="M1 1 L7 7 M7 1 L1 7" stroke="#fff" stroke-width="1.7"/></svg>
<div class="t" style="left:823.4px;top:145px;font-size:10px;font-weight:bold;color:#fff">Ausgewählter Text</div>
<svg class="a" style="left:0;top:0;overflow:visible" width="1" height="1">
 <rect x="820.3" y="160" width="13.4" height="12.6" fill="#c6e2f8" stroke="#86c0ea" stroke-width="0.9"/>
 <circle cx="824" cy="164" r="1.3" fill="#3a5a50"/><circle cx="824" cy="169" r="1.3" fill="#3a4a50"/>
 <path d="M827 163.5 h4 M827 166 h4 M827 168.5 h4" stroke="#a8c0d8" stroke-width="0.9"/>
 <path d="M836 167 l2 -5.5 2 5.5" fill="none" stroke="#5a8ad0" stroke-width="1.1"/>
 <path d="M836.3 167.8 h3.4 l-3.4 2.8 h3.4" fill="none" stroke="#c06060" stroke-width="0.9"/>
 <path d="M843 162 v7.5" stroke="#333" stroke-width="1.2"/><circle cx="843" cy="169.5" r="1.2" fill="#222"/>
 <rect x="848.7" y="160.5" width="0.8" height="12" fill="#d8d0c0"/>
 <rect x="853" y="162" width="10" height="8.8" fill="#e0e8f8" stroke="#7080c0" stroke-width="1"/>
 <rect x="854.5" y="163.5" width="3" height="2" fill="#8ab0e0"/><rect x="858" y="163.5" width="3.5" height="2" fill="#f0d080"/>
 <path d="M854.5 167.5 h7" stroke="#a0b0d8" stroke-width="1"/>
</svg>
<div class="a" style="left:819px;top:175px;width:13.3px;height:358.0px;background:#f0f0f0"></div>
<div class="a" style="left:819px;top:175.00px;width:200px;height:13.24px;background:#f0f0f0"></div>
<div class="t" style="left:835px;top:178.90px;font-weight:bold;color:#222">Aktion</div>
<div class="t" style="left:835px;top:192.14px;color:#555">Action</div>
<div class="a" style="left:913px;top:188.24px;width:106px;height:13.24px;overflow:hidden"><div class="t" style="left:2.2px;top:3.90px;font-weight:bold;color:#222">Keine</div></div>
<div class="a" style="left:819px;top:201.48px;width:200px;height:13.24px;background:#f0f0f0"></div>
<div class="t" style="left:835px;top:205.38px;font-weight:bold;color:#222">Allgemein</div>
<div class="t" style="left:835px;top:218.62px;color:#555">Label</div>
<div class="t" style="left:835px;top:231.86px;color:#555">MarkupType</div>
<div class="a" style="left:913px;top:227.96px;width:106px;height:13.24px;overflow:hidden"><div class="t" style="left:2.2px;top:3.90px;font-weight:bold;color:#222">None</div></div>
<div class="t" style="left:835px;top:245.10px;color:#555">ToolTip</div>
<div class="t" style="left:835px;top:258.34px;color:#555">Value</div>
<div class="a" style="left:913px;top:254.44px;width:106px;height:13.24px;overflow:hidden"><div class="t" style="left:2.2px;top:3.90px;font-weight:bold;color:#222;letter-spacing:-0.12px">=Fields!Einspeisung__KWh.Value</div></div>
<div class="a" style="left:819px;top:267.68px;width:200px;height:13.24px;background:#f0f0f0"></div>
<div class="t" style="left:835px;top:271.58px;font-weight:bold;color:#222">Ausrichtung</div>
<div class="t" style="left:835px;top:284.82px;color:#555">Indent</div>
<div class="t" style="left:835px;top:298.06px;color:#555">SpaceAfter</div>
<div class="t" style="left:835px;top:311.30px;color:#555">SpaceBefore</div>
<div class="t" style="left:835px;top:324.54px;color:#555">TextAlign</div>
<div class="a" style="left:913px;top:320.64px;width:106px;height:13.24px;overflow:hidden"><div class="t" style="left:2.2px;top:3.90px;font-weight:bold;color:#222">Default</div></div>
<div class="a" style="left:819px;top:333.88px;width:200px;height:13.24px;background:#f0f0f0"></div>
<div class="t" style="left:835px;top:337.78px;font-weight:bold;color:#222">Listen</div>
<div class="t" style="left:835px;top:351.02px;color:#555">ListLevel</div>
<div class="a" style="left:913px;top:347.12px;width:106px;height:13.24px;overflow:hidden"><div class="t" style="left:2.2px;top:3.90px;font-weight:bold;color:#222">0</div></div>
<div class="t" style="left:835px;top:364.26px;color:#555">ListStyle</div>
<div class="a" style="left:913px;top:360.36px;width:106px;height:13.24px;overflow:hidden"><div class="t" style="left:2.2px;top:3.90px;font-weight:bold;color:#222">None</div></div>
<div class="a" style="left:819px;top:373.60px;width:200px;height:13.24px;background:#f0f0f0"></div>
<div class="t" style="left:835px;top:377.50px;font-weight:bold;color:#222">Lokalisierung</div>
<div class="t" style="left:835px;top:390.74px;color:#555">Calendar</div>
<div class="a" style="left:913px;top:386.84px;width:106px;height:13.24px;overflow:hidden"><div class="t" style="left:2.2px;top:3.90px;font-weight:bold;color:#222">Default</div></div>
<div class="t" style="left:835px;top:403.98px;color:#555">Language</div>
<div class="t" style="left:835px;top:417.22px;color:#555">NumeralLanguage</div>
<div class="t" style="left:835px;top:430.46px;color:#555">NumeralVariant</div>
<div class="a" style="left:913px;top:426.56px;width:106px;height:13.24px;overflow:hidden"><div class="t" style="left:2.2px;top:3.90px;font-weight:bold;color:#222">1</div></div>
<div class="t" style="left:835px;top:443.70px;color:#555">ValueLocID</div>
<div class="a" style="left:819px;top:453.04px;width:200px;height:13.24px;background:#f0f0f0"></div>
<div class="t" style="left:835px;top:456.94px;font-weight:bold;color:#222">Nummer</div>
<div class="t" style="left:835px;top:470.18px;color:#555">Format</div>
<div class="a" style="left:819px;top:479.52px;width:200px;height:13.24px;background:#f0f0f0"></div>
<div class="t" style="left:835px;top:483.42px;font-weight:bold;color:#222">Schriftart</div>
<div class="t" style="left:835px;top:496.66px;color:#555">Color</div>
<div class="a" style="left:914.5px;top:495.26px;width:11px;height:10px;background:#333;border:1px solid #222"></div>
<div class="t" style="left:930px;top:496.66px;font-weight:bold;color:#222">#333333</div>
<div class="t" style="left:835px;top:509.90px;color:#555">Font</div>
<div class="a" style="left:913px;top:506.00px;width:106px;height:13.24px;overflow:hidden"><div class="t" style="left:2.2px;top:3.90px;font-weight:bold;color:#222;letter-spacing:-0.12px">Segoe UI; 10pt; Default; Normal</div></div>
<div class="t" style="left:835px;top:523.14px;color:#555">LineHeight</div>
<svg class="a" style="left:0;top:0;overflow:visible" width="1" height="1">
<path d="M823.5 181.00 l2.5 2.5 2.5 -2.5" fill="none" stroke="#666" stroke-width="0.9"/>
<rect x="832.3" y="200.98" width="187" height="0.8" fill="#f0f0f0"/>
<path d="M823.5 207.48 l2.5 2.5 2.5 -2.5" fill="none" stroke="#666" stroke-width="0.9"/>
<rect x="832.3" y="227.46" width="187" height="0.8" fill="#f0f0f0"/>
<rect x="832.3" y="240.70" width="187" height="0.8" fill="#f0f0f0"/>
<rect x="832.3" y="253.94" width="187" height="0.8" fill="#f0f0f0"/>
<rect x="832.3" y="267.18" width="187" height="0.8" fill="#f0f0f0"/>
<path d="M823.5 273.68 l2.5 2.5 2.5 -2.5" fill="none" stroke="#666" stroke-width="0.9"/>
<rect x="832.3" y="293.66" width="187" height="0.8" fill="#f0f0f0"/>
<path d="M824.5 286.22 l2.2 2.2 -2.2 2.2" fill="none" stroke="#aaa" stroke-width="0.8"/>
<rect x="832.3" y="306.90" width="187" height="0.8" fill="#f0f0f0"/>
<rect x="832.3" y="320.14" width="187" height="0.8" fill="#f0f0f0"/>
<rect x="832.3" y="333.38" width="187" height="0.8" fill="#f0f0f0"/>
<path d="M823.5 339.88 l2.5 2.5 2.5 -2.5" fill="none" stroke="#666" stroke-width="0.9"/>
<rect x="832.3" y="359.86" width="187" height="0.8" fill="#f0f0f0"/>
<rect x="832.3" y="373.10" width="187" height="0.8" fill="#f0f0f0"/>
<path d="M823.5 379.60 l2.5 2.5 2.5 -2.5" fill="none" stroke="#666" stroke-width="0.9"/>
<rect x="832.3" y="399.58" width="187" height="0.8" fill="#f0f0f0"/>
<rect x="832.3" y="412.82" width="187" height="0.8" fill="#f0f0f0"/>
<rect x="832.3" y="426.06" width="187" height="0.8" fill="#f0f0f0"/>
<rect x="832.3" y="439.30" width="187" height="0.8" fill="#f0f0f0"/>
<rect x="832.3" y="452.54" width="187" height="0.8" fill="#f0f0f0"/>
<path d="M823.5 459.04 l2.5 2.5 2.5 -2.5" fill="none" stroke="#666" stroke-width="0.9"/>
<rect x="832.3" y="479.02" width="187" height="0.8" fill="#f0f0f0"/>
<path d="M823.5 485.52 l2.5 2.5 2.5 -2.5" fill="none" stroke="#666" stroke-width="0.9"/>
<rect x="832.3" y="505.50" width="187" height="0.8" fill="#f0f0f0"/>
<rect x="832.3" y="518.74" width="187" height="0.8" fill="#f0f0f0"/>
<path d="M824.5 511.30 l2.2 2.2 -2.2 2.2" fill="none" stroke="#aaa" stroke-width="0.8"/>
<rect x="832.3" y="531.98" width="187" height="0.8" fill="#f0f0f0"/>
<rect x="912.3" y="175" width="0.8" height="357.5" fill="#f0f0f0"/>
</svg>
<div class="a" style="left:819px;top:656.5px;width:200px;height:1.5px;background:#d8d8d8"></div>
<div class="t" style="left:823px;top:662.5px;font-weight:bold;color:#f0f0f0">Action</div>
<div class="t" style="left:823px;top:675px;color:#d0d0d0">Gibt eine Aktion an, die dem Berichtselement zuge...</div>
<!-- status right -->
<div class="a" style="left:841px;top:703px;width:13px;height:15px;background:#f4f4f4"></div>
<svg class="a" style="left:0;top:0;overflow:visible" width="1" height="1">
 <rect x="843.5" y="706" width="7" height="9" fill="#dde8f4" stroke="#8aa0c0" stroke-width="0.7"/>
 <path d="M845 712 l3 -3 2 2" fill="none" stroke="#e08040" stroke-width="1"/>
 <rect x="857.5" y="706" width="8" height="7" fill="#aaa"/><rect x="858.5" y="704" width="6" height="3" fill="#ccc"/><rect x="858.5" y="711" width="6" height="4" fill="#ddd"/>
 
 <rect x="907.5" y="709.7" width="7.5" height="2.6" fill="#f0f0f0"/>
 <rect x="920" y="710.5" width="84" height="1" fill="#c8c8c8"/>
 <rect x="960.5" y="707.5" width="1.3" height="6" fill="#e8e8e8"/>
 <rect x="1007" y="709.7" width="9" height="2.6" fill="#f0f0f0"/><rect x="1010.2" y="706.5" width="2.6" height="9" fill="#f0f0f0"/>
</svg>
<div class="t" style="left:875.5px;top:707px;font-size:8.8px;color:#e0e0e0">100%</div>

<div class="t" style="left:8.3px;top:706.5px;font-size:8.8px;color:#d8d8d8">Power BI Report Builder</div>
<div class="a" style="left:816px;top:114px;width:1px;height:23px;background:#3c3c3c"></div>
<div class="a" style="left:185.3px;top:114px;width:1px;height:26px;background:#3a3a3a"></div>
</body></html>
